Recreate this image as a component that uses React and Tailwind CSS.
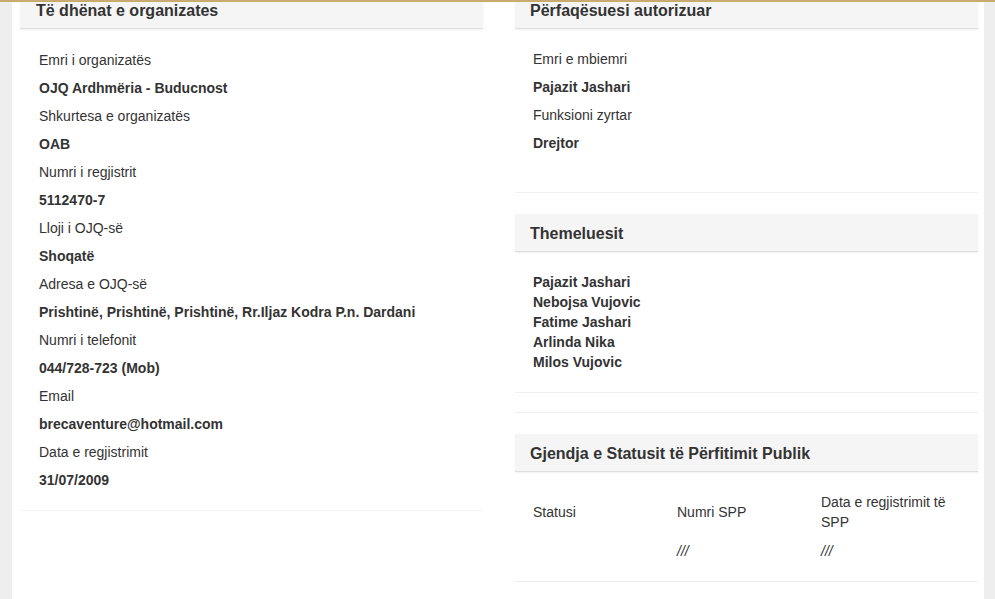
const ORG = [
  ['Emri i organizatës', 'OJQ Ardhmëria - Buducnost'],
  ['Shkurtesa e organizatës', 'OAB'],
  ['Numri i regjistrit', '5112470-7'],
  ['Lloji i OJQ-së', 'Shoqatë'],
  ['Adresa e OJQ-së', 'Prishtinë, Prishtinë, Prishtinë, Rr.Iljaz Kodra P.n. Dardani'],
  ['Numri i telefonit', '044/728-723 (Mob)'],
  ['Email', 'brecaventure@hotmail.com'],
  ['Data e regjistrimit', '31/07/2009'],
]

const REP = [
  ['Emri e mbiemri', 'Pajazit Jashari'],
  ['Funksioni zyrtar', 'Drejtor'],
]

const FOUNDERS = ['Pajazit Jashari', 'Nebojsa Vujovic', 'Fatime Jashari', 'Arlinda Nika', 'Milos Vujovic']

function Header({ title, pad = 'pl-4' }) {
  return (
    <div className={`bg-[#f5f5f5] border-b border-[#dedede] shadow-[0_1px_2px_rgba(0,0,0,0.06)] pt-[9px] pb-[6px] ${pad}`}>
      <h3 className="text-[16px] leading-[22px] font-bold text-[#333]">{title}</h3>
    </div>
  )
}

function Fields({ rows }) {
  return rows.map(([label, value]) => (
    <div key={label}>
      <p className="leading-5 mb-2">{label}</p>
      <p className="leading-5 mb-2 font-bold">{value}</p>
    </div>
  ))
}

export default function App() {
  return (
    <div className="relative h-[599px] overflow-hidden bg-[#eeeeee] font-['Liberation_Sans',Arial,sans-serif] text-[14px] text-[#333]">
      <div className="absolute top-0 inset-x-0 h-[2px] bg-[#c9ab72] z-10" />
      <div className="ml-[12px] w-[972px] h-full bg-white flex gap-[32px] pl-[8px]">
        {/* left column */}
        <div className="w-[463px] -mt-[9px]">
          <Header title="Të dhënat e organizates" />
          <div className="pl-[19px] pt-[21px] pb-3 border-b border-[#f3f3f3]">
            <Fields rows={ORG} />
          </div>
        </div>

        {/* right column */}
        <div className="w-[463px] -mt-[9px]">
          <Header title="Përfaqësuesi autorizuar" pad="pl-[15px]" />
          <div className="pl-[18px] pt-5 pb-[31px] border-b border-[#f0f0f0]">
            <Fields rows={REP} />
          </div>

          <div className="mt-[21px]">
            <Header title="Themeluesit" pad="pl-[15px]" />
            <div className="pl-[18px] py-5 border-b border-[#efefef]">
              {FOUNDERS.map((n) => (
                <p key={n} className="leading-5 font-bold">{n}</p>
              ))}
            </div>
            <div className="h-[20px] border-b border-[#efefef]" />
          </div>

          <div className="mt-[21px]">
            <Header title="Gjendja e Statusit të Përfitimit Publik" pad="pl-[15px]" />
            <div className="pl-[18px] pt-[20px] pb-[20px] border-b border-[#efefef]">
              <div className="grid grid-cols-[144px_144px_140px] items-center">
                <div className="leading-5">Statusi</div>
                <div className="leading-5">Numri SPP</div>
                <div className="leading-5">Data e regjistrimit të SPP</div>
              </div>
              <div className="grid grid-cols-[144px_144px_140px] mt-[9px]">
                <div className="leading-5" />
                <div className="leading-5 italic">///</div>
                <div className="leading-5 italic">///</div>
              </div>
            </div>
          </div>
        </div>
      </div>
    </div>
  )
}
